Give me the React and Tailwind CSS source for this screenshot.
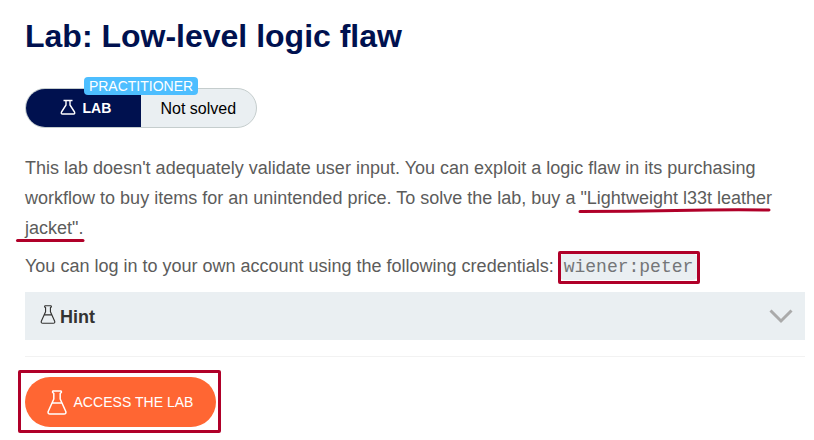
function Flask({ className, strokeWidth = 1.5 }) {
  return (
    <svg viewBox="0 0 20 25" fill="none" stroke="currentColor" strokeWidth={strokeWidth} strokeLinecap="round" strokeLinejoin="round" className={className}>
      <path d="M6 1h8q1.2 1.5-.8 2.4V9L18.8 21.5Q19.4 24 17 24H3Q.6 24 1.2 21.5L6.8 9V3.4Q4.8 2.5 6 1M5 13h10" />
    </svg>
  );
}

function Mark({ className, viewBox, children }) {
  return (
    <svg viewBox={viewBox} className={"pointer-events-none absolute " + className} fill="none" stroke="#b00029" strokeWidth="3" strokeLinecap="round" strokeLinejoin="round">
      {children}
    </svg>
  );
}

function Status() {
  return (
    <div className="relative mt-[31px] flex h-10 w-[232px] rounded-full border border-[#c5cdcd] bg-[#eaeff2]">
      <div className="flex w-[115px] items-center rounded-l-full bg-[#00114f] pl-[34px] text-white">
        <svg viewBox="0 0 16 16" className="mb-0.5 h-4 w-4" fill="none" stroke="currentColor" strokeWidth="1.4" strokeLinejoin="round">
          <path d="M3.5 1.5h9M6 1.5V6L1.5 13Q.7 15 2.5 15h11q1.8 0 1-2L10 6V1.5" />
        </svg>
        <span className="ml-[6.5px] text-[14px] font-bold">LAB</span>
      </div>
      <span className="pl-[19.5px] text-[16px] leading-[39px] text-black">Not solved</span>
      <span className="absolute -top-[12px] left-[58px] h-[18px] w-[114px] rounded-[4px] bg-[#4dbeff] text-center text-[14px] leading-[18px] text-white">PRACTITIONER</span>
    </div>
  );
}

export default function App() {
  return (
    <main className="h-[440px] w-[814px] overflow-hidden bg-white pl-[25px] pr-[9px] pt-[16px] font-['Liberation_Sans',Arial,sans-serif] text-[18px] leading-[30px] text-[#5c5c5b]">
      <h1 className="text-[32px] font-bold leading-[41px] text-[#00114f]">Lab: Low-level logic flaw</h1>
      <Status />
      <p className="mt-[25px] whitespace-nowrap tracking-[0.006px]">
        This lab doesn't adequately validate user input. You can exploit a logic flaw in its purchasing
        <br />
        workflow to buy items for an unintended price. To solve the lab, buy a{" "}
        <span className="relative">
          "Lightweight l33t leather
          <Mark className="-left-[2px] top-[18px] h-[8px] w-[196px]" viewBox="0 0 196 8">
            <path d="M2 5.5Q50 5.5 98 4.5T191 4" />
          </Mark>
        </span>
        <br />
        <span className="relative">
          jacket".
          <Mark className="-left-[10px] top-[18px] h-[8px] w-[72px]" viewBox="0 0 72 8">
            <path d="M2.5 4.5H68" />
          </Mark>
        </span>
      </p>
      <p className="mt-2 whitespace-nowrap">
        You can log in to your own account using the following credentials:{" "}
        <span className="relative inline-block h-[26px] rounded-[5px] bg-[#eaeff2] px-[5px] font-['Liberation_Mono',monospace] leading-[26px] text-[#747678]">
          wiener:peter
          <span className="absolute -left-[1px] -top-[3px] h-[33px] w-[142px] rounded-[2px] border-3 border-[#b00029]" />
        </span>
      </p>
      <section className="mt-[11px] flex h-12 items-center bg-[#eaeff2] pl-[15px] pr-3 text-[#333332]">
        <Flask className="mb-1 h-[19px] w-4" strokeWidth={1.5} />
        <span className="ml-1 mt-0.5 font-bold">Hint</span>
        <svg viewBox="0 0 24 16" className="ml-auto h-4 w-6" fill="none" stroke="#aaaaaa" strokeWidth="3">
          <path d="M1.5 2.5L12 13L22.5 2.5" />
        </svg>
      </section>
      <hr className="mt-4 border-[#f2f2f2]" />
      <button className="relative mt-5 flex h-[50px] w-[191px] items-center rounded-full bg-[#ff6633] pl-[22px] text-[14px] text-white">
        <Flask className="h-[25px] w-5" />
        <span className="ml-[6.5px] whitespace-nowrap tracking-[0.03px]">ACCESS THE LAB</span>
        <span className="absolute -left-[7px] -top-[7px] h-[63px] w-[203px] rounded-[2px] border-3 border-[#b00029]" />
      </button>
    </main>
  );
}
